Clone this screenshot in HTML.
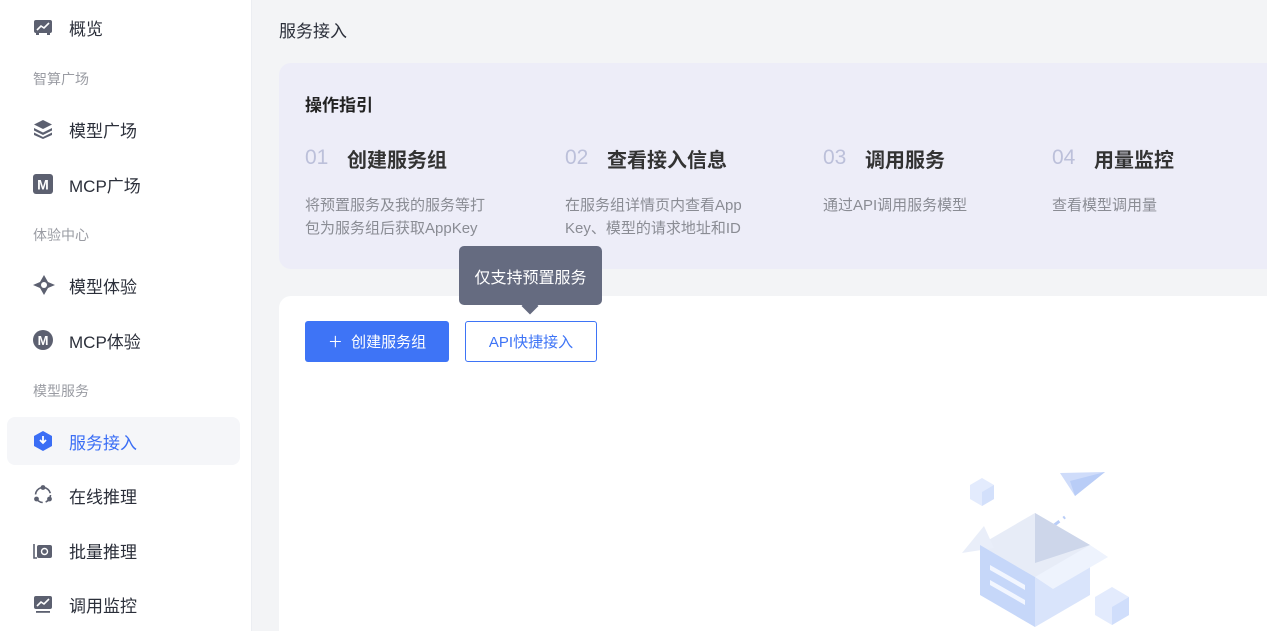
<!DOCTYPE html>
<html><head><meta charset="utf-8"><style>
*{margin:0;padding:0;box-sizing:border-box}
html,body{width:1267px;height:631px;overflow:hidden}
body{background:#f3f4f6;font-family:"Liberation Sans","Noto Sans CJK SC",sans-serif;position:relative}
.side{position:absolute;left:0;top:0;width:252px;height:631px;background:#fff;border-right:1px solid #eceef2}
.item{position:absolute;left:7px;width:233px;height:48px;border-radius:8px;display:flex;align-items:center;font-size:17px;color:#2b2f3a}
.item svg{position:absolute;left:26px}
.item span{position:absolute;left:62px}
.grp{position:absolute;left:33px;font-size:14px;color:#9a9ca3}
.act{background:#f5f6f9;color:#3b6ef5}
.t{position:absolute}
.n{position:absolute;font-size:21px;color:#bcc0da}
.h{position:absolute;font-size:20px;font-weight:bold;color:#333}
.d{position:absolute;font-size:15px;line-height:23px;color:#8a8c94}
</style></head><body>
<div class="side">
 <div class="item" style="top:3px"><svg width="20" height="20" viewBox="0 0 20 20"><rect x="1" y="3" width="18" height="13" rx="2" fill="#5c6070"/><path d="M4 13l4-4 3 2 5-5" stroke="#fff" stroke-width="1.6" fill="none"/><rect x="3" y="16" width="3" height="2" fill="#5c6070"/><rect x="14" y="16" width="3" height="2" fill="#5c6070"/></svg><span>概览</span></div>
 <div class="grp" style="top:69px">智算广场</div>
 <div class="item" style="top:105px"><svg width="20" height="20" viewBox="0 0 20 20"><path d="M10 1l9 4.5-9 4.5-9-4.5z" fill="#5c6070"/><path d="M1 9l9 4.5 9-4.5v2.5l-9 4.5-9-4.5z" fill="#5c6070"/><path d="M1 13.5l9 4.5 9-4.5V16l-9 4-9-4z" fill="#5c6070"/></svg><span>模型广场</span></div>
 <div class="item" style="top:160px"><svg width="20" height="20" viewBox="0 0 20 20"><rect x="0" y="0" width="20" height="20" rx="3" fill="#5c6070"/><text x="10" y="15.5" font-size="14" font-weight="bold" fill="#fff" text-anchor="middle" font-family="Liberation Sans">M</text></svg><span>MCP广场</span></div>
 <div class="grp" style="top:225px">体验中心</div>
 <div class="item" style="top:261px"><svg width="22" height="20" viewBox="0 0 22 20"><path d="M0 10l7-3 4-7 4 7 7 3-7 3-4 7-4-7z" fill="#5c6070"/><circle cx="11" cy="10" r="3" fill="#fff"/></svg><span>模型体验</span></div>
 <div class="item" style="top:316px"><svg width="20" height="20" viewBox="0 0 20 20"><circle cx="10" cy="10" r="10" fill="#5c6070"/><text x="10" y="15" font-size="13" font-weight="bold" fill="#fff" text-anchor="middle" font-family="Liberation Sans">M</text></svg><span>MCP体验</span></div>
 <div class="grp" style="top:381px">模型服务</div>
 <div class="item act" style="top:417px"><svg width="20" height="20" viewBox="0 0 20 20"><path d="M10 0l9 5v10l-9 5-9-5V5z" fill="#3b6ef5"/><path d="M10 5v7M7 9l3 3 3-3" stroke="#fff" stroke-width="1.8" fill="none"/></svg><span>服务接入</span></div>
 <div class="item" style="top:471px"><svg width="20" height="20" viewBox="0 0 20 20"><circle cx="10" cy="10" r="7.5" stroke="#5c6070" stroke-width="1.6" fill="none" stroke-dasharray="9 3"/><circle cx="10" cy="2.5" r="2.4" fill="#5c6070"/><circle cx="3.5" cy="14" r="2.4" fill="#5c6070"/><circle cx="16.5" cy="14" r="2.4" fill="#5c6070"/></svg><span>在线推理</span></div>
 <div class="item" style="top:526px"><svg width="20" height="20" viewBox="0 0 20 20"><path d="M1 4v14h3" stroke="#5c6070" stroke-width="1.6" fill="none"/><rect x="4" y="5" width="15" height="13" rx="2" fill="#5c6070"/><circle cx="11.5" cy="11.5" r="3" stroke="#fff" stroke-width="1.4" fill="none"/></svg><span>批量推理</span></div>
 <div class="item" style="top:580px"><svg width="20" height="20" viewBox="0 0 20 20"><rect x="1" y="2" width="18" height="13" rx="2" fill="#5c6070"/><path d="M4 12l4-4 3 2 5-5" stroke="#fff" stroke-width="1.6" fill="none"/><rect x="3" y="17" width="14" height="1.8" fill="#5c6070"/></svg><span>调用监控</span></div>
</div>

<div class="t" style="left:279px;top:17px;font-size:17px;color:#2b2f3a">服务接入</div>

<div style="position:absolute;left:279px;top:63px;width:1000px;height:206px;background:#ededf8;border-radius:12px"></div>
<div class="t" style="left:305px;top:91px;font-size:17px;font-weight:bold;color:#222">操作指引</div>

<div class="n" style="left:305px;top:146px">01</div>
<div class="h" style="left:347px;top:144px">创建服务组</div>
<div class="d" style="left:305px;top:194px">将预置服务及我的服务等打<br>包为服务组后获取AppKey</div>

<div class="n" style="left:565px;top:146px">02</div>
<div class="h" style="left:607px;top:144px">查看接入信息</div>
<div class="d" style="left:565px;top:194px">在服务组详情页内查看App<br>Key、模型的请求地址和ID</div>

<div class="n" style="left:823px;top:146px">03</div>
<div class="h" style="left:865px;top:144px">调用服务</div>
<div class="d" style="left:823px;top:194px">通过API调用服务模型</div>

<div class="n" style="left:1052px;top:146px">04</div>
<div class="h" style="left:1094px;top:144px">用量监控</div>
<div class="d" style="left:1052px;top:194px">查看模型调用量</div>

<div style="position:absolute;left:279px;top:296px;width:1000px;height:335px;background:#fff;border-radius:12px 12px 0 0"></div>

<div style="position:absolute;left:305px;top:321px;width:144px;height:41px;background:#3e74f6;border-radius:3px;color:#fff;font-size:15px;display:flex;align-items:center;justify-content:center">＋&nbsp;&nbsp;创建服务组</div>
<div style="position:absolute;left:465px;top:321px;width:132px;height:41px;background:#fff;border:1.5px solid #3e74f6;border-radius:3px;color:#3e74f6;font-size:15px;display:flex;align-items:center;justify-content:center">API快捷接入</div>

<div style="position:absolute;left:459px;top:246px;width:143px;height:59px;background:#656b80;border-radius:5px;color:#fff;font-size:16px;display:flex;align-items:center;justify-content:center">仅支持预置服务</div>
<div style="position:absolute;left:524px;top:300px;width:12px;height:12px;background:#656b80;transform:rotate(45deg)"></div>

<svg style="position:absolute;left:950px;top:465px" width="190" height="166" viewBox="0 0 190 166">
 <path d="M20 20l12-7 12 7v14l-12 7-12-7z" fill="#e3ebfd"/><path d="M32 27v14l12-7V20z" fill="#d3e0fb"/>
 <path d="M110 8l45-1-30 24z" fill="#cfdcfa"/><path d="M125 31l-5-15 35-9z" fill="#b9cdf7"/>
 <path d="M75 82l40-30" stroke="#b9cdf7" stroke-width="3" stroke-dasharray="7 5"/>
 <path d="M30 80l55-32 55 32-55 32z" fill="#e7ecf7"/>
 <path d="M85 48v50l55-18z" fill="#cdd6ea"/>
 <path d="M12 88l22-27 10 22z" fill="#e9eef9"/>
 <path d="M30 80l55 32v50l-55-32z" fill="#c6d7f9"/>
 <path d="M85 112l55-32v50l-55 32z" fill="#d9e4fb"/>
 <path d="M85 112l55-32 18 12-55 32z" fill="#eef3fd"/>
 <path d="M40 100l35 20v5l-35-20zM40 115l35 20v5l-35-20z" fill="#f2f6ff"/>
 <path d="M145 132l17-10 17 10v18l-17 10-17-10z" fill="#e3ebfd"/><path d="M162 142v18l17-10v-18z" fill="#d0defb"/>
</svg>
</body></html>
